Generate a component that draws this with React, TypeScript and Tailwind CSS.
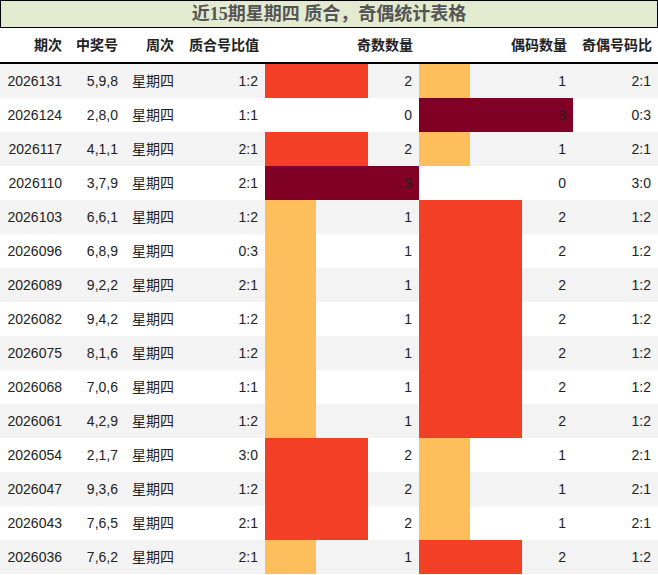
const rows: [string, string, string, number, number, string][] = [
  ["2026131", "5,9,8", "1:2", 2, 1, "2:1"],
  ["2026124", "2,8,0", "1:1", 0, 3, "0:3"],
  ["2026117", "4,1,1", "2:1", 2, 1, "2:1"],
  ["2026110", "3,7,9", "2:1", 3, 0, "3:0"],
  ["2026103", "6,6,1", "1:2", 1, 2, "1:2"],
  ["2026096", "6,8,9", "0:3", 1, 2, "1:2"],
  ["2026089", "9,2,2", "2:1", 1, 2, "1:2"],
  ["2026082", "9,4,2", "1:2", 1, 2, "1:2"],
  ["2026075", "8,1,6", "1:2", 1, 2, "1:2"],
  ["2026068", "7,0,6", "1:1", 1, 2, "1:2"],
  ["2026061", "4,2,9", "1:2", 1, 2, "1:2"],
  ["2026054", "2,1,7", "3:0", 2, 1, "2:1"],
  ["2026047", "9,3,6", "1:2", 2, 1, "2:1"],
  ["2026043", "7,6,5", "2:1", 2, 1, "2:1"],
  ["2026036", "7,6,2", "2:1", 1, 2, "1:2"],
];

const headers = ["期次", "中奖号", "周次", "质合号比值", "奇数数量", "偶码数量", "奇偶号码比"];

const cols = "grid grid-cols-[68px_56px_56px_85px_154px_154px_85px]";

// bar colour by count (1..3)
function barColor(v: number) {
  if (v >= 3) return "bg-[#800026]";
  if (v === 2) return "bg-[#f33f26]";
  return "bg-[#febe5c]";
}

function BarCell({ value }: { value: number }) {
  return (
    <div className="relative flex items-center justify-end pr-[7px]">
      {value > 0 && (
        <div
          className={`absolute left-0 top-0 bottom-0 ${barColor(value)}`}
          style={{ width: `${(value / 3) * 154}px` }}
        />
      )}
      <span className="relative">{value}</span>
    </div>
  );
}

export default function App() {
  return (
    <div
      className="w-[658px] h-[575px] bg-white text-[#222] text-[14px]"
      style={{ fontFamily: '"Liberation Sans", "Noto Sans CJK SC", sans-serif' }}
    >
      <div
        className="h-[28px] border border-black bg-[#e2ebd0] flex items-center justify-center text-[18px] font-bold text-[#555]"
        style={{ fontFamily: '"Liberation Serif", "Noto Sans CJK SC", serif' }}
      >
        近15期星期四 质合，奇偶统计表格
      </div>
      <div className={`${cols} h-[36px] border-b-2 border-black font-bold`}>
        {headers.map((h) => (
          <div key={h} className="flex items-center justify-end pr-[6px]">
            {h}
          </div>
        ))}
      </div>
      {rows.map((r, i) => (
        <div
          key={r[0]}
          className={`${cols} h-[34px] ${i % 2 === 0 ? "bg-[#f3f3f3]" : "bg-white"}`}
        >
          <div className="flex items-center justify-end pr-[6px]">{r[0]}</div>
          <div className="flex items-center justify-end pr-[6px]">{r[1]}</div>
          <div className="flex items-center justify-end pr-[6px]">星期四</div>
          <div className="flex items-center justify-end pr-[7px]">{r[2]}</div>
          <BarCell value={r[3]} />
          <BarCell value={r[4]} />
          <div className="flex items-center justify-end pr-[7px]">{r[5]}</div>
        </div>
      ))}
    </div>
  );
}
